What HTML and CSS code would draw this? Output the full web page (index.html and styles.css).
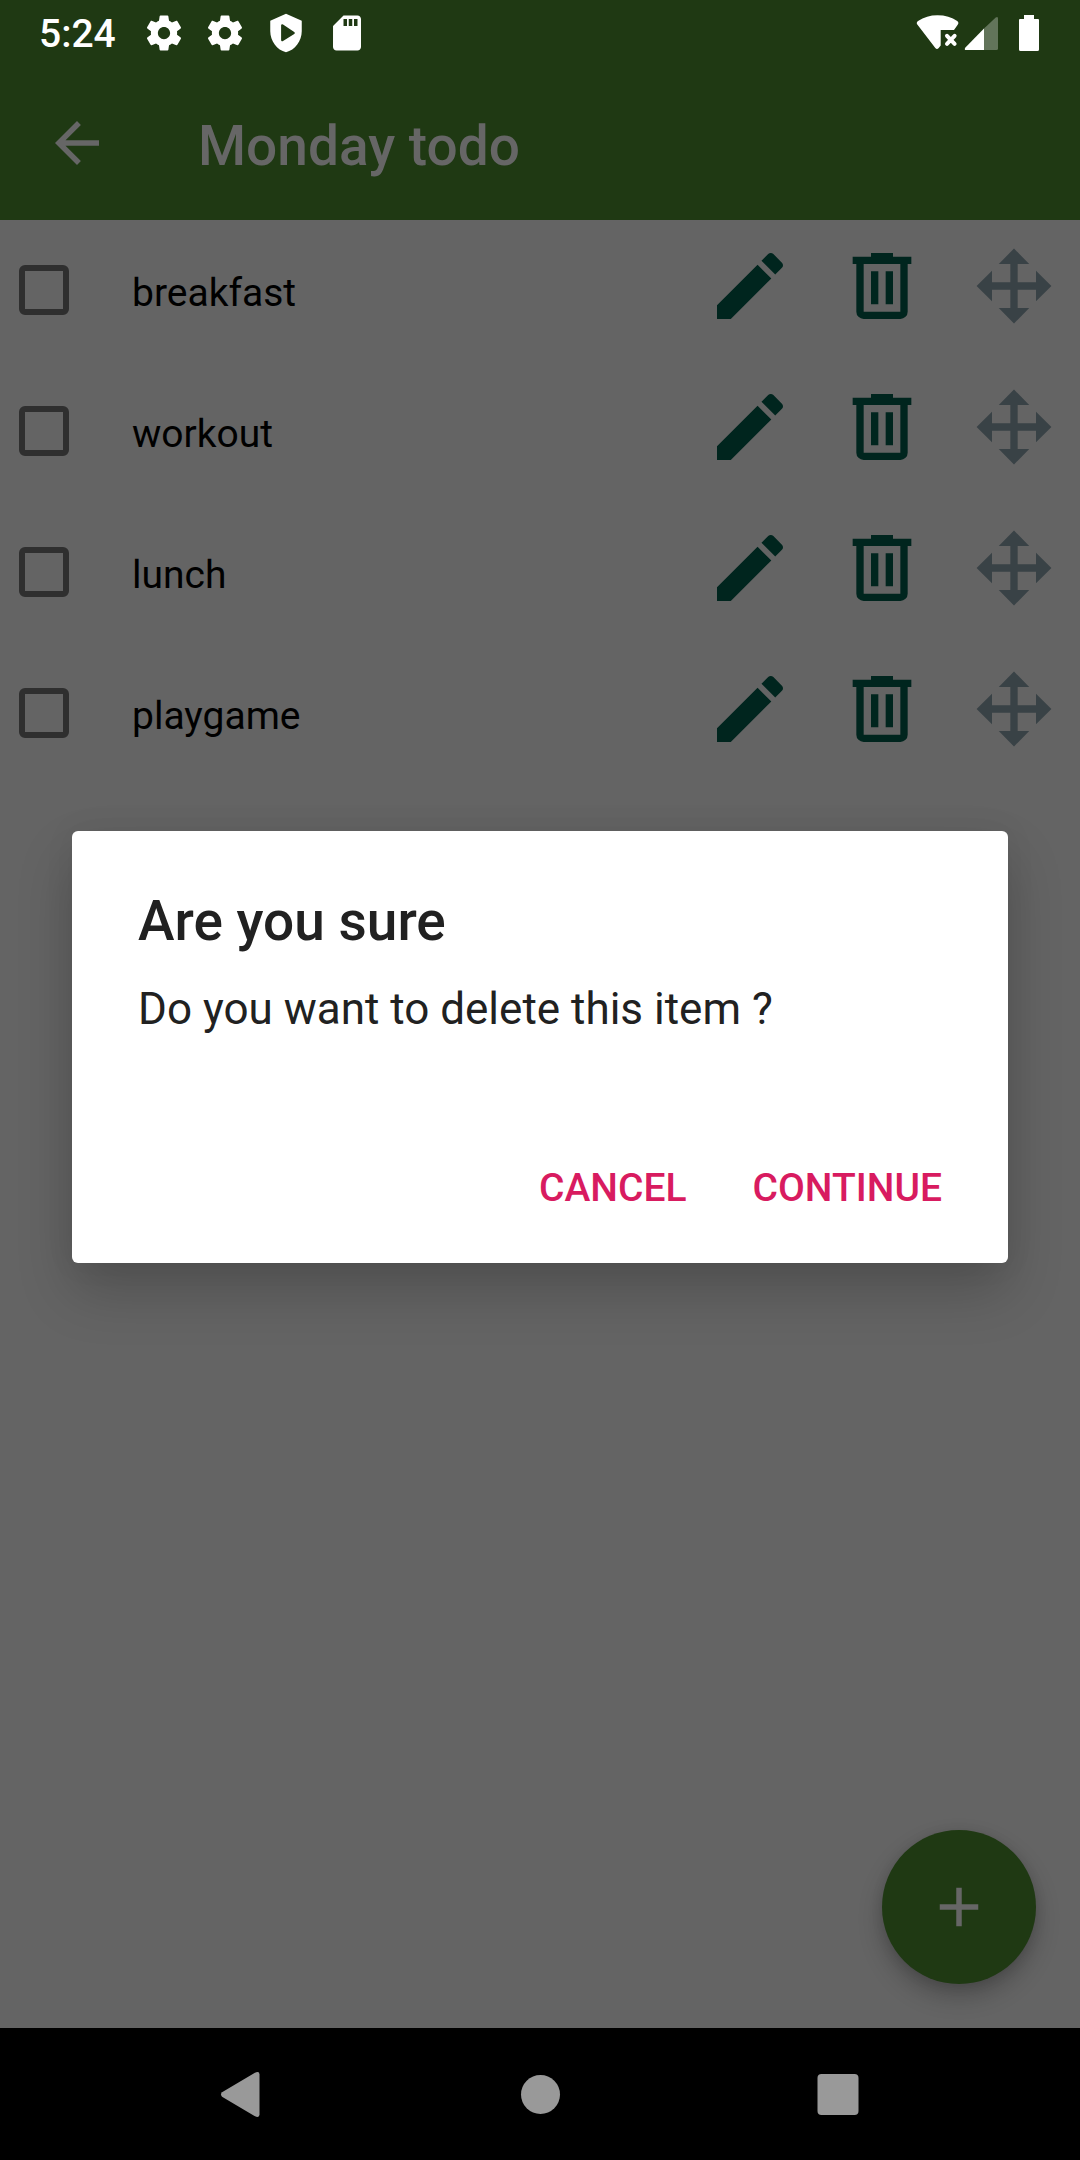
FILE: index.html
```html
<!DOCTYPE html>
<html lang="en">
<head>
<meta charset="utf-8">
<meta name="viewport" content="width=device-width, initial-scale=1">
<title>Monday todo</title>
<link rel="stylesheet" href="styles.css">
</head>
<body>
<svg class="sprite" aria-hidden="true">
  <symbol id="gear" viewBox="0 0 24 24"><path d="M19.43 12.98c.04-.32.07-.64.07-.98s-.03-.66-.07-.98l2.11-1.65c.19-.15.24-.42.12-.64l-2-3.46c-.12-.22-.39-.3-.61-.22l-2.49 1c-.52-.4-1.08-.73-1.69-.98l-.38-2.65C14.46 2.18 14.25 2 14 2h-4c-.25 0-.46.18-.49.42l-.38 2.65c-.61.25-1.17.59-1.69.98l-2.49-1c-.23-.09-.49 0-.61.22l-2 3.46c-.13.22-.07.49.12.64l2.11 1.65c-.04.32-.07.65-.07.98s.03.66.07.98l-2.11 1.65c-.19.15-.24.42-.12.64l2 3.46c.12.22.39.3.61.22l2.49-1c.52.4 1.08.73 1.69.98l.38 2.65c.03.24.24.42.49.42h4c.25 0 .46-.18.49-.42l.38-2.65c.61-.25 1.17-.59 1.69-.98l2.49 1c.23.09.49 0 .61-.22l2-3.46c.12-.22.07-.49-.12-.64l-2.11-1.65zM12 15.5c-1.93 0-3.5-1.57-3.5-3.5s1.57-3.5 3.500-3.500 3.500 1.570 3.500 3.500-1.570 3.500-3.500 3.500z"/></symbol>
  <symbol id="pencil" viewBox="0 0 24 24"><path d="M3 17.250V21h3.750L17.810 9.940l-3.750-3.750L3 17.250zM20.710 7.040c.39-.39.39-1.020 0-1.410l-2.340-2.340c-.39-.39-1.020-.39-1.410 0l-1.830 1.830 3.750 3.750 1.830-1.830z"/></symbol>
  <symbol id="trash" viewBox="0 0 24 24"><path d="M9 3v1H4v2h1v13a2 2 0 0 0 2 2h10a2 2 0 0 0 2-2V6h1V4h-5V3H9zM7 6h10v13H7V6zm2 2v9h2V8H9zm4 0v9h2V8h-2z"/></symbol>
  <symbol id="move" viewBox="0 0 24 24"><path d="M12 1.800L16.150 6H13v5h5V7.850L22.200 12 18 16.150V13h-5v5h3.150L12 22.200 7.850 18H11v-5H6v3.150L1.800 12 6 7.850V11h5V6H7.850z"/></symbol>
</svg>

<div class="screen">
  <div class="status-bar">
    <div class="status-left">
      <time class="clock">5:24</time>
      <svg class="status-icon"><use href="#gear"/></svg>
      <svg class="status-icon"><use href="#gear"/></svg>
      <svg class="status-icon" viewBox="0 0 24 24"><path fill-rule="evenodd" d="M12 1L3 5v6c0 5.550 3.840 10.740 9 12 5.160-1.260 9-6.450 9-12V5l-9-4zM9.200 7.600a.7.7 0 0 1 1.100-.5l6.400 4.300a.7.7 0 0 1 0 1.200l-6.400 4a.7.7 0 0 1-1.100-.5z"/></svg>
      <svg class="status-icon" viewBox="0 0 24 24"><path d="M18 2h-8L4.020 8 4 20c0 1.100.9 2 2 2h12c1.100 0 2-.9 2-2V4c0-1.100-.9-2-2-2zm-6 6h-2V4h2v4zm3 0h-2V4h2v4zm3 0h-2V4h2v4z"/></svg>
    </div>
    <div class="status-right">
      <svg class="wifi" viewBox="0 0 44 42"><path d="M1.500 12.800Q-.2 10.600 2 9C8 5.200 14 3.300 21.500 3.300S36 5.200 41.200 9Q43.300 10.600 41.700 12.800L38 18H24.700V33.500L22.700 36Q21 38 19.300 36z"/><path class="wifi-cross" d="M31 23.800l7.600 8M38.600 23.800l-7.600 8"/></svg>
      <svg class="signal" viewBox="0 0 34 42"><path d="M20 16.500V38H2Q0 38 1.200 35.700z"/><path class="faint" d="M20 16.500L31.700 5.500Q34 4 34 6.500V36.500Q34 38 32.500 38H20z"/></svg>
      <svg class="battery" viewBox="0 0 54 42"><path d="M22 3h10v4h4q1 0 1 1v29.500q0 1.500-1.500 1.500h-17q-1.500 0-1.500-1.500V8q0-1 1-1h4z"/></svg>
    </div>
  </div>

  <header class="app-bar">
    <button class="icon-button back" aria-label="Back"><svg viewBox="0 0 24 24"><path d="M20 11H7.830l5.590-5.590L12 4l-8 8 8 8 1.410-1.410L7.830 13H20v-2z"/></svg></button>
    <h1 class="title">Monday todo</h1>
  </header>

  <main class="content">
    <ul class="todo-list">
      <li class="todo">
        <label class="task"><input class="check" type="checkbox"><span class="task-name">breakfast</span></label>
        <div class="actions">
          <button class="icon-button" aria-label="Edit"><svg><use href="#pencil"/></svg></button>
          <button class="icon-button" aria-label="Delete"><svg><use href="#trash"/></svg></button>
          <button class="icon-button drag" aria-label="Move"><svg><use href="#move"/></svg></button>
        </div>
      </li>
      <li class="todo">
        <label class="task"><input class="check" type="checkbox"><span class="task-name">workout</span></label>
        <div class="actions">
          <button class="icon-button" aria-label="Edit"><svg><use href="#pencil"/></svg></button>
          <button class="icon-button" aria-label="Delete"><svg><use href="#trash"/></svg></button>
          <button class="icon-button drag" aria-label="Move"><svg><use href="#move"/></svg></button>
        </div>
      </li>
      <li class="todo">
        <label class="task"><input class="check" type="checkbox"><span class="task-name">lunch</span></label>
        <div class="actions">
          <button class="icon-button" aria-label="Edit"><svg><use href="#pencil"/></svg></button>
          <button class="icon-button" aria-label="Delete"><svg><use href="#trash"/></svg></button>
          <button class="icon-button drag" aria-label="Move"><svg><use href="#move"/></svg></button>
        </div>
      </li>
      <li class="todo">
        <label class="task"><input class="check" type="checkbox"><span class="task-name">playgame</span></label>
        <div class="actions">
          <button class="icon-button" aria-label="Edit"><svg><use href="#pencil"/></svg></button>
          <button class="icon-button" aria-label="Delete"><svg><use href="#trash"/></svg></button>
          <button class="icon-button drag" aria-label="Move"><svg><use href="#move"/></svg></button>
        </div>
      </li>
    </ul>
    <button class="fab" aria-label="Add item"><svg viewBox="0 0 24 24"><path d="M19 13h-6v6h-2v-6H5v-2h6V5h2v6h6v2z"/></svg></button>
  </main>

  <nav class="nav-bar" aria-label="System">
    <button class="nav-button" aria-label="Back"><svg viewBox="0 0 48 48"><path d="M4 26.700Q2 24.500 4 22.300L36.500 3Q41.500 .5 41.500 4.500V44.500Q41.500 48.500 36.500 46z"/></svg></button>
    <button class="nav-button" aria-label="Home"><svg viewBox="0 0 48 48"><circle cx="24.500" cy="24.500" r="19.500"/></svg></button>
    <button class="nav-button" aria-label="Recents"><svg viewBox="0 0 48 48"><rect x="3.500" y="4" width="41" height="41" rx="4"/></svg></button>
  </nav>

  <div class="overlay">
    <section class="dialog" role="alertdialog" aria-labelledby="dialog-title" aria-describedby="dialog-text">
      <h2 class="dialog-title" id="dialog-title">Are you sure</h2>
      <p class="dialog-text" id="dialog-text">Do you want to delete this item ?</p>
      <div class="dialog-actions">
        <button class="dialog-button">CANCEL</button>
        <button class="dialog-button">CONTINUE</button>
      </div>
    </section>
  </div>
</div>
</body>
</html>
```

FILE: styles.css
```css
* {
  box-sizing: border-box;
  margin: 0;
  padding: 0;
}

body {
  font-family: Roboto, "Liberation Sans", sans-serif;
  background: #646464;
  color: #000;
}

button {
  border: 0;
  background: none;
  font: inherit;
  color: inherit;
}

svg {
  display: block;
  fill: currentColor;
}

.sprite {
  position: absolute;
  width: 0;
  height: 0;
}

.screen {
  position: relative;
  display: flex;
  flex-direction: column;
  min-height: 100vh;
}

/* System status bar */
.status-bar {
  display: flex;
  justify-content: space-between;
  align-items: center;
  height: 66px;
  padding: 0 24px 0 39px;
  background: #1f3913;
  color: #fff;
}

.status-left {
  display: flex;
  align-items: center;
  gap: 19px;
}

.clock {
  margin-right: 8px;
  padding-top: 2px;
  font-size: 39px;
  line-height: 46px;
  font-weight: 500;
}

.status-icon {
  width: 42px;
  height: 42px;
}

.status-right {
  display: flex;
  gap: 4px;
}

.status-right svg {
  height: 42px;
}

.wifi {
  width: 44px;
}

.wifi-cross {
  fill: none;
  stroke: currentColor;
  stroke-width: 4;
  stroke-linecap: round;
}

.signal {
  width: 34px;
}

.faint {
  opacity: 0.3;
}

.battery {
  width: 54px;
}

/* App bar */
.app-bar {
  display: flex;
  align-items: center;
  gap: 88px;
  height: 154px;
  padding: 0 44px;
  background: #1f3913;
  color: #666;
}

.title {
  padding-top: 6px;
  font-size: 55px;
  line-height: 64px;
  font-weight: 500;
}

.icon-button svg {
  width: 88px;
  height: 88px;
}

.back svg {
  width: 66px;
  height: 66px;
}

/* List */
.content {
  display: flex;
  flex-direction: column;
  flex: 1;
}

.todo-list {
  flex: 1;
  list-style: none;
}

.todo {
  display: flex;
  justify-content: space-between;
  align-items: center;
  height: 141px;
  padding: 0 22px 2px 19px;
}

.task {
  display: flex;
  align-items: center;
  gap: 63px;
}

.check {
  appearance: none;
  width: 50px;
  height: 50px;
  border: 6px solid #2f2f2f;
  border-radius: 6px;
}

.task-name {
  padding-top: 6px;
  font-size: 39px;
  line-height: 46px;
}

.actions {
  display: flex;
  gap: 44px;
  padding-bottom: 8px;
  color: #00251e;
}

.drag {
  color: #394246;
}

.fab {
  display: grid;
  place-items: center;
  align-self: flex-end;
  width: 154px;
  height: 154px;
  margin: 44px;
  border-radius: 50%;
  background: #1f3913;
  color: #666;
  box-shadow: 0 12px 24px rgba(0, 0, 0, 0.24), 0 2px 12px rgba(0, 0, 0, 0.1);
}

.fab svg {
  width: 66px;
  height: 66px;
}

/* System navigation */
.nav-bar {
  display: grid;
  grid-template-columns: repeat(3, 27.6%);
  justify-content: center;
  height: 132px;
  background: #000;
  color: #999;
}

.nav-button {
  display: grid;
  place-items: center;
}

.nav-button svg {
  width: 48px;
  height: 48px;
}

/* Confirmation dialog */
.overlay {
  position: absolute;
  inset: 66px 0 132px;
  display: flex;
  align-items: center;
  padding: 0 72px;
}

.dialog {
  flex: 1;
  padding: 58px 44px 9px 66px;
  border-radius: 6px;
  background: #fff;
  color: #212121;
  box-shadow: 0 28px 56px rgba(0, 0, 0, 0.2), 0 0 32px rgba(0, 0, 0, 0.06);
}

.dialog-title {
  margin-bottom: 30px;
  font-size: 55px;
  line-height: 64px;
  font-weight: 500;
}

.dialog-text {
  font-size: 44px;
  line-height: 52px;
}

.dialog-actions {
  display: flex;
  justify-content: flex-end;
  gap: 22px;
  margin-top: 87px;
}

.dialog-button {
  height: 132px;
  padding: 0 22px;
  font-size: 39px;
  line-height: 46px;
  font-weight: 500;
  color: #d81b60;
}
```
